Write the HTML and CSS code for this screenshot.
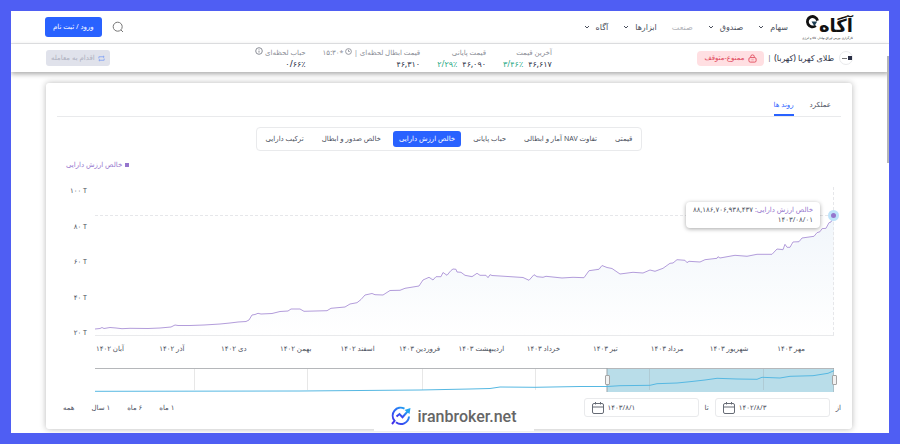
FILE: index.html
```html
<!DOCTYPE html>
<html lang="fa" dir="rtl">
<head>
  <meta charset="UTF-8">
  <meta name="viewport" content="width=device-width, initial-scale=1.0">
  <title>طلای کهربا (کهربا)</title>
  <link rel="stylesheet" href="styles.css">
</head>
<body>
  <div class="screen">
    <header class="header">
      <a href="#" class="logo">
        <svg class="logo-ring" viewBox="0 0 16 16" width="15" height="15"><path d="M11.5 12.5A5.5 5.5 0 1 1 13.4 7" fill="none" stroke="#111" stroke-width="3"/><path d="M7 8h6l-3 5z" fill="#1c3d52"/></svg>
        <span class="logo-name">آگاه</span>
        <span class="logo-sub">کارگزاری بورس اوراق بهادار، کالا و انرژی</span>
      </a>
      <nav class="nav">
        <a href="#">سهام <svg class="chevron" viewBox="0 0 6 6"><path d="M1 2l2 2 2-2"/></svg></a>
        <a href="#">صندوق <svg class="chevron" viewBox="0 0 6 6"><path d="M1 2l2 2 2-2"/></svg></a>
        <a href="#" class="muted">صنعت</a>
        <a href="#">ابزارها <svg class="chevron" viewBox="0 0 6 6"><path d="M1 2l2 2 2-2"/></svg></a>
        <a href="#">آگاه <svg class="chevron" viewBox="0 0 6 6"><path d="M1 2l2 2 2-2"/></svg></a>
      </nav>
      <button class="search" aria-label="جستجو">
        <svg viewBox="0 0 12 12" width="12" height="12"><circle cx="5.7" cy="5.7" r="4.5"/><path d="M9 9l2 2"/></svg>
      </button>
      <button class="login">ورود / ثبت نام</button>
    </header>

    <section class="symbol-bar">
      <div class="symbol">
        <span class="symbol-logo"><i></i></span>
        <h1>طلای کهربا (کهربا)</h1>
        <span class="divider">|</span>
        <span class="badge">
          <svg viewBox="0 0 10 10" width="9" height="9"><rect x="1" y="4" width="8" height="5" rx="1.5"/><path d="M3 4V3a2 2 0 0 1 4 0v1M3.2 6.5h.6M4.7 6.5h.6M6.2 6.5h.6"/></svg>
          ممنوع-متوقف
        </span>
      </div>
      <div class="stats">
        <div class="stat">
          <span class="stat-label">آخرین قیمت</span>
          <span class="stat-value"><b>۴۶,۶۱۷</b><em>۳/۴۶٪</em></span>
        </div>
        <div class="stat">
          <span class="stat-label">قیمت پایانی</span>
          <span class="stat-value"><b>۴۶,۰۹۰</b><em>۲/۲۹٪</em></span>
        </div>
        <div class="stat">
          <span class="stat-label">قیمت ابطال لحظه‌ای |
            <svg viewBox="0 0 8 8" width="7" height="7"><circle cx="4" cy="4" r="3.3"/><path d="M4 2v2h1.4"/></svg>
            *۱۵:۳۰</span>
          <span class="stat-value"><b>۴۶,۳۱۰</b></span>
        </div>
        <div class="stat">
          <span class="stat-label">حباب لحظه‌ای
            <svg viewBox="0 0 8 8" width="8" height="8"><circle cx="4" cy="4" r="3.3"/><path d="M4 3.6v2M4 2.2v.6"/></svg></span>
          <span class="stat-value"><b>۰/۶۶٪</b></span>
        </div>
      </div>
      <button class="trade" disabled>
        <svg viewBox="0 0 8 8" width="7" height="7"><path d="M1 4V2h6M5.8 1L7 2 5.8 3M7 4v2H1M2.2 5L1 6l1.200 1"/></svg>
        اقدام به معامله
      </button>
    </section>

    <main class="content">
      <div class="card">
        <div class="tabs">
          <a href="#">عملکرد</a>
          <a href="#" class="active">روند ها</a>
        </div>

        <div class="segments">
          <button>قیمتی</button>
          <button>تفاوت NAV آمار و ابطالی</button>
          <button>حباب پایانی</button>
          <button class="active">خالص ارزش دارایی</button>
          <button>خالص صدور و ابطال</button>
          <button>ترکیب دارایی</button>
        </div>

        <div class="legend"><i></i>خالص ارزش دارایی</div>

        <div class="chart">
          <div class="y-axis">
            <span>۱۰۰ T</span>
            <span>۸۰ T</span>
            <span>۶۰ T</span>
            <span>۴۰ T</span>
            <span>۲۰ T</span>
          </div>
          <div class="plot">
            <svg viewBox="95 187 739 148" preserveAspectRatio="none">
              <defs>
                <linearGradient id="fade" x1="0" y1="0" x2="0" y2="1">
                  <stop offset="0" stop-color="#f1f6fb"/>
                  <stop offset="1" stop-color="#ffffff"/>
                </linearGradient>
              </defs>
              <path class="area" d="M95 335V329L160 328 175 325 220 324 249 320 252 315 288 311 297 309 304 311 327 311 345 307 357 303 365 295 383 295 390 290 419 286 429 277 441 277 453 269 465 275 523 277 529 280 534 275 584 278 589 271 602 266 612 269 620 274 643 273 663 268 677 260 700 262 717 258 735 255 772 254 777 249 790 247 802 238 814 236 826 228 834 216V335z"/>
              <path class="guide" d="M95 215.5H834M833.500 187V335"/>
              <path class="line" d="M95 329L100 328.500 102 327.500 104 328.500 110 327.500 116 328 122 328.700 130 328.300 148 328.500 160 328 171 327 175 325 178 325.500 190 325.500 204 325 220 324 230 323 238 322 246 321.500 249 320 252 315 255 314.500 258 313.300 261 314 272 313.500 280 311.500 288 311 291 309 300 309 304 311.300 327 310.700 331 308.300 345 307 350 304 357 302.700 361 299.500 365 295 372 293.500 375 294.700 383 295 390 290.500 400 290.300 405 288.300 419 286 423 280 429 277.300 433 280 436 276.700 441 276.700 443 272.500 447 275.300 451 270.500 453 269 456 269.300 457 272 461 272.300 465 275.300 472 276.700 477 273.300 480 275.300 486 275.300 488 277.700 490 274.700 492 275.500 500 276 523 277.500 529 280.300 534 274.700 537 276.700 543 277.300 546 276.300 562 278 573 277.300 584 277.700 589 270.700 599 269.300 602 265.500 607 267.500 612 268.500 620 274 633 272.300 643 273 650 270 655 271.300 663 268.300 670 263.300 673 263 677 259.700 685 260.300 687 262.700 689 261.300 700 262 705 259.700 717 258.300 718 256.700 720 258 735 255.300 747 256.300 757 254.300 772 254.300 777 249 783 249.700 785 244.300 787 247.300 790 247.300 793 242 799 241.700 802 238 814 236.300 817 232.700 820 231.700 822 228.700 826 228.300 829 222.700 831 222 834 215.500"/>
            </svg>
            <span class="marker"></span>
            <div class="tooltip">
              <div><span>خالص ارزش دارایی:</span> ۸۸,۱۸۶,۷۰۶,۹۳۸,۴۳۷</div>
              <div>۱۴۰۳/۰۸/۰۱</div>
            </div>
          </div>
        </div>

        <div class="x-axis">
          <span>آبان ۱۴۰۲</span>
          <span>آذر ۱۴۰۲</span>
          <span>دی ۱۴۰۲</span>
          <span>بهمن ۱۴۰۲</span>
          <span>اسفند ۱۴۰۲</span>
          <span>فروردین ۱۴۰۳</span>
          <span>اردیبهشت ۱۴۰۳</span>
          <span>خرداد ۱۴۰۳</span>
          <span>تیر ۱۴۰۳</span>
          <span>مرداد ۱۴۰۳</span>
          <span>شهریور ۱۴۰۳</span>
          <span>مهر ۱۴۰۳</span>
        </div>

        <div class="brush">
          <svg viewBox="95 368 739 24" preserveAspectRatio="none">
            <rect class="selection" x="607" y="368" width="227" height="24"/>
            <path class="ticks" d="M194.500 368V390M307.500 368V390M422.500 368V390M535.500 368V390M649.500 368V390M763.500 368V390"/>
            <path class="top" d="M95 368.500H834"/>
            <path class="edges" d="M607 368V392M834 368V392"/>
            <path class="overview" d="M95 391.300L300 391 420 390 470 389 490 388.500 500 387 535 387.300 580 386.500 607 386.500 620 385.700 650 385.300 657 383.700 677 383 690 381.700 705 380 717 378.300 737 379 757 379.300 762 377.300 780 378 790 376.300 813 375.700 828 373.300 834 370.700"/>
          </svg>
          <span class="handle start"></span>
          <span class="handle end"></span>
        </div>

        <div class="range">
          <label for="from">از</label>
          <div class="date">
            <input type="text" id="from" value="۱۴۰۲/۸/۳">
            <svg viewBox="0 0 12 12" width="12" height="12"><rect x=".5" y="1.500" width="11" height="10" rx="1.500"/><path d="M.5 5h11M3.500 0v2.500M8.500 0v2.500"/></svg>
          </div>
          <label for="to">تا</label>
          <div class="date">
            <input type="text" id="to" value="۱۴۰۳/۸/۱">
            <svg viewBox="0 0 12 12" width="12" height="12"><rect x=".5" y="1.500" width="11" height="10" rx="1.500"/><path d="M.5 5h11M3.500 0v2.500M8.500 0v2.500"/></svg>
          </div>
          <div class="presets">
            <button>۱ ماه</button>
            <button>۶ ماه</button>
            <button>۱ سال</button>
            <button>همه</button>
          </div>
        </div>
      </div>
    </main>

    <div class="scrollbar"></div>
    <div class="watermark">
      <svg viewBox="0 0 20 20" width="20" height="20">
        <defs>
          <linearGradient id="mark" x1="0" y1="1" x2="1" y2="0">
            <stop offset="0" stop-color="#4326e8"/>
            <stop offset=".5" stop-color="#2f68f5"/>
            <stop offset="1" stop-color="#1fb4ee"/>
          </linearGradient>
        </defs>
        <g fill="none" stroke="url(#mark)" stroke-width="2">
          <path d="M13.500 2.600A8 8 0 0 0 3.600 14.800L1 18M5 16.200A8 8 0 0 0 18 10.500"/>
          <path d="M5.500 10.500L8.500 8l3 3.200L17 5"/>
        </g>
        <path d="M13.500 4l6-2-1 6z" fill="#22a5f0"/>
      </svg>
      <span>iranbroker.net</span>
    </div>
  </div>
</body>
</html>
```
FILE: styles.css
```css
:root {
  --frame: #4f5ef3;
  --blue: #2962ff;
  --purple: #9575cd;
  --text: #4a4f5c;
  --dark: #2b3046;
  --muted: #8a8d96;
  --line: #e9eaec;
}

* {
  box-sizing: border-box;
  margin: 0;
  padding: 0;
}

body {
  background-color: var(--frame);
  padding: 11px;
  font-family: "Noto Sans", "DejaVu Sans", sans-serif;
  font-size: 7px;
  line-height: 12px;
  color: var(--text);
}

a {
  color: inherit;
  text-decoration: none;
}

button {
  font: inherit;
  color: inherit;
  background: none;
  border: none;
  cursor: pointer;
}

svg {
  fill: none;
  stroke: currentColor;
}

.screen {
  position: relative;
  background-color: #fff;
  overflow: hidden;
}

/* header */
.header {
  display: flex;
  align-items: center;
  height: 33px;
  padding: 0 36px 0 34px;
  border-bottom: 1px solid var(--line);
}

.logo {
  position: relative;
  width: 48px;
  height: 26px;
  display: flex;
  flex-direction: column;
  color: #111;
}

.logo svg {
  stroke: none;
}

.logo-ring {
  position: absolute;
  left: 0;
  top: 0;
}

.logo-name {
  font-size: 18px;
  font-weight: 900;
  line-height: 22px;
}

.logo-sub {
  font-size: 3px;
  line-height: 4px;
  white-space: nowrap;
}

.nav {
  display: flex;
  gap: 15px;
  margin-right: 17px;
  font-size: 8px;
}

.nav a {
  display: flex;
  align-items: center;
  gap: 6px;
}

.nav .muted {
  color: #b0b2b8;
}

.chevron {
  width: 6px;
  height: 6px;
}

.search {
  display: flex;
  margin-right: auto;
  color: #777;
}

.login {
  margin-right: 10px;
  padding: 4px 8px;
  border-radius: 3px;
  background-color: var(--blue);
  color: #fff;
}

/* symbol bar */
.symbol-bar {
  position: relative;
  display: flex;
  align-items: center;
  height: 28px;
  padding: 0 36px 0 35px;
  background-color: #fff;
  box-shadow: 0 2px 5px rgba(0, 0, 0, 0.35);
}

.symbol {
  display: flex;
  align-items: center;
  gap: 3px;
}

.symbol-logo {
  display: flex;
  align-items: center;
  width: 14px;
  height: 14px;
  margin-left: 2px;
  border: 1px solid var(--line);
  border-radius: 50%;
}

.symbol-logo::after {
  content: "";
  width: 5px;
  height: 1px;
  background-color: #777;
}

.symbol-logo i {
  width: 4px;
  height: 4px;
  margin-left: 1px;
  background-color: var(--dark);
}

.symbol h1 {
  font-size: 8px;
  font-weight: 500;
  color: var(--dark);
}

.badge {
  display: flex;
  align-items: center;
  gap: 4px;
  height: 15px;
  padding: 0 7px;
  border-radius: 4px;
  background-color: #ffdfe2;
  color: #e0475a;
}

.stats {
  display: flex;
  gap: 17px;
  margin: 0 auto;
}

.stat {
  display: flex;
  flex-direction: column;
}

.stat-label {
  line-height: 11px;
  color: var(--muted);
  white-space: nowrap;
}

.stat-value {
  display: flex;
  gap: 5px;
  font-size: 8px;
  line-height: 11px;
}

.stat-value b {
  font-weight: 500;
  color: var(--dark);
}

.stat-value em {
  font-style: normal;
  color: #1fa884;
}

.trade {
  display: flex;
  align-items: center;
  gap: 3px;
  height: 16px;
  padding: 0 5px;
  border-radius: 3px;
  background-color: #e0e2eb;
  color: #aeb1bf;
}

.trade svg {
  color: #86a5f5;
}

/* card */
.content {
  padding: 11px 37px 4px 35px;
}

.card {
  padding: 10px 11px 12px;
  border-radius: 3px;
  background-color: #fff;
  box-shadow: 0 0 6px rgba(0, 0, 0, 0.28);
}

.tabs {
  display: flex;
  gap: 16px;
  padding: 0 10px;
  border-bottom: 1px solid var(--line);
}

.tabs a {
  padding: 6px 0 3px;
}

.tabs .active {
  border-bottom: 2px solid var(--blue);
  color: var(--blue);
}

.segments {
  display: flex;
  width: fit-content;
  margin: 10px auto 0;
  padding: 3px;
  gap: 6px;
  border: 1px solid var(--line);
  border-radius: 4px;
}

.segments button {
  padding: 2px 6px;
  border-radius: 3px;
}

.segments .active {
  background-color: var(--blue);
  color: #fff;
}

.legend {
  display: flex;
  align-items: center;
  justify-content: flex-end;
  gap: 3px;
  margin-top: 8px;
  padding-left: 9px;
  color: var(--purple);
}

.legend i {
  width: 4px;
  height: 4px;
  background-color: var(--purple);
}

.chart {
  display: flex;
  direction: ltr;
  height: 149px;
  margin-top: 16px;
  padding-right: 7px;
}

.y-axis {
  display: flex;
  flex-direction: column;
  justify-content: space-between;
  width: 38px;
  padding: 0 8px 0 0;
  margin: -2px 0 -3px;
  text-align: right;
}

.plot {
  position: relative;
  flex: 1;
  border-bottom: 1px solid var(--line);
}

.plot svg,
.brush svg {
  display: block;
  width: 100%;
  height: 100%;
}

.plot .area {
  fill: url(#fade);
  stroke: none;
}

.plot .guide {
  stroke: #e6e7ea;
  stroke-dasharray: 3 2;
}

.plot .line {
  stroke: #b39ddb;
  stroke-linejoin: round;
}

.marker {
  position: absolute;
  right: -5px;
  top: 23px;
  width: 11px;
  height: 11px;
  border: 3px solid #bfe3fa;
  border-radius: 50%;
  background-color: var(--purple);
}

.tooltip {
  position: absolute;
  right: 14px;
  top: 15px;
  padding: 3px 7px;
  border-radius: 4px;
  background-color: #fff;
  box-shadow: 0 1px 4px rgba(0, 0, 0, 0.35);
  direction: rtl;
  line-height: 10px;
  white-space: nowrap;
}

.tooltip span {
  color: var(--purple);
}

.x-axis {
  display: grid;
  grid-template-columns: repeat(12, 1fr);
  direction: ltr;
  margin-top: 7px;
  padding: 0 19px 0 22px;
  text-align: center;
  white-space: nowrap;
}

.x-axis span {
  direction: rtl;
}

.brush {
  position: relative;
  height: 24px;
  margin: 13px 7px 0 38px;
}

.brush .selection {
  fill: #b9dde9;
  stroke: none;
}

.brush .ticks {
  stroke: #888;
  stroke-opacity: 0.2;
}

.brush .top {
  stroke: #b5b7ba;
}

.brush .edges {
  stroke: #9aa5ab;
}

.brush .overview {
  stroke: #56b8e2;
}

.handle {
  position: absolute;
  top: 7px;
  width: 5px;
  height: 10px;
  border: 1px solid #a5a5a5;
  border-radius: 1px;
  background-color: #f2f2f2;
}

.handle.start {
  left: 69%;
}

.handle.end {
  right: -3px;
}

.range {
  display: flex;
  align-items: center;
  gap: 6px;
  margin-top: 6px;
}

.date {
  display: flex;
  align-items: center;
  width: 115px;
  height: 19px;
  padding: 0 7px;
  border: 1px solid var(--line);
  border-radius: 3px;
}

.date input {
  flex: 1;
  min-width: 0;
  margin-left: 4px;
  border: none;
  background: none;
  direction: ltr;
  font: inherit;
  color: inherit;
}

.date svg {
  color: #666b75;
}

.presets {
  display: flex;
  gap: 17px;
  margin-right: auto;
  padding-left: 6px;
}

.scrollbar {
  position: absolute;
  right: 0;
  top: 45px;
  width: 2px;
  height: 107px;
  background-color: #b4b5b8;
}

.watermark {
  position: absolute;
  left: 363px;
  bottom: 2px;
  display: flex;
  direction: ltr;
  align-items: center;
  justify-content: center;
  gap: 6px;
  width: 160px;
  height: 30px;
  background-color: #fff;
  color: #666;
  font: 500 16px Roboto, sans-serif;
}

.watermark svg {
  stroke: none;
}
```
